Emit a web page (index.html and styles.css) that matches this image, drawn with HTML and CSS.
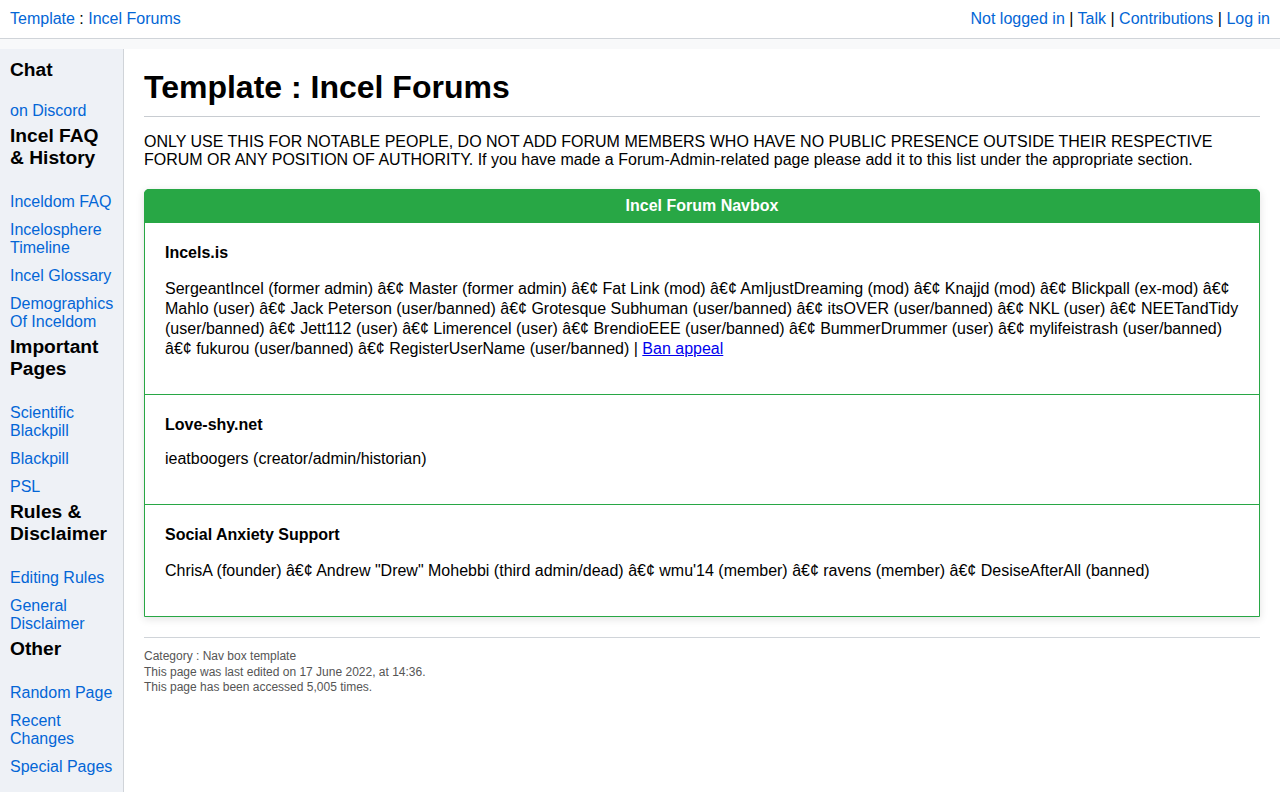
FILE: index.html
```html
<!DOCTYPE html>
<html lang="en">
<head>
<meta charset="utf-8">
<title>Template : Incel Forums</title>
<link rel="stylesheet" href="styles.css">
</head>
<body>
<header class="topbar">
  <div class="crumbs"><a href="#">Template</a> : <a href="#">Incel Forums</a></div>
  <div class="userlinks"><a href="#">Not logged in</a> | <a href="#">Talk</a> | <a href="#">Contributions</a> | <a href="#">Log in</a></div>
</header>
<div class="layout">
  <nav class="sidebar">
    <h3 class="side-head">Chat</h3>
    <ul class="side-list side-list-first">
      <li><a href="#">on Discord</a></li>
    </ul>
    <h3 class="side-head">Incel FAQ &amp; History</h3>
    <ul class="side-list">
      <li><a href="#">Inceldom FAQ</a></li>
      <li><a href="#">Incelosphere Timeline</a></li>
      <li><a href="#">Incel Glossary</a></li>
      <li><a href="#">Demographics Of Inceldom</a></li>
    </ul>
    <h3 class="side-head">Important Pages</h3>
    <ul class="side-list">
      <li><a href="#">Scientific Blackpill</a></li>
      <li><a href="#">Blackpill</a></li>
      <li><a href="#">PSL</a></li>
    </ul>
    <h3 class="side-head">Rules &amp; Disclaimer</h3>
    <ul class="side-list">
      <li><a href="#">Editing Rules</a></li>
      <li><a href="#">General Disclaimer</a></li>
    </ul>
    <h3 class="side-head">Other</h3>
    <ul class="side-list">
      <li><a href="#">Random Page</a></li>
      <li><a href="#">Recent Changes</a></li>
      <li><a href="#">Special Pages</a></li>
    </ul>
  </nav>
  <main class="content">
    <h1 class="page-title">Template : Incel Forums</h1>
    <p class="intro">ONLY USE THIS FOR NOTABLE PEOPLE, DO NOT ADD FORUM MEMBERS WHO HAVE NO PUBLIC PRESENCE OUTSIDE THEIR RESPECTIVE FORUM OR ANY POSITION OF AUTHORITY. If you have made a Forum-Admin-related page please add it to this list under the appropriate section.</p>
    <div class="navbox">
      <div class="navbox-head">Incel Forum Navbox</div>
      <section class="navbox-sec">
        <h4 class="sec-title">Incels.is</h4>
        <p class="sec-text">SergeantIncel (former admin) &acirc;&euro;&cent; Master (former admin) &acirc;&euro;&cent; Fat Link (mod) &acirc;&euro;&cent; AmIjustDreaming (mod) &acirc;&euro;&cent; Knajjd (mod) &acirc;&euro;&cent; Blickpall (ex-mod) &acirc;&euro;&cent; Mahlo (user) &acirc;&euro;&cent; Jack Peterson (user/banned) &acirc;&euro;&cent; Grotesque Subhuman (user/banned) &acirc;&euro;&cent; itsOVER (user/banned) &acirc;&euro;&cent; NKL (user) &acirc;&euro;&cent; NEETandTidy (user/banned) &acirc;&euro;&cent; Jett112 (user) &acirc;&euro;&cent; Limerencel (user) &acirc;&euro;&cent; BrendioEEE (user/banned) &acirc;&euro;&cent; BummerDrummer (user) &acirc;&euro;&cent; mylifeistrash (user/banned) &acirc;&euro;&cent; fukurou (user/banned) &acirc;&euro;&cent; RegisterUserName (user/banned) | <a class="plain-link" href="#">Ban appeal</a></p>
      </section>
      <section class="navbox-sec">
        <h4 class="sec-title sec-title-tight">Love-shy.net</h4>
        <p class="sec-text">ieatboogers (creator/admin/historian)</p>
      </section>
      <section class="navbox-sec">
        <h4 class="sec-title">Social Anxiety Support</h4>
        <p class="sec-text">ChrisA (founder) &acirc;&euro;&cent; Andrew "Drew" Mohebbi (third admin/dead) &acirc;&euro;&cent; wmu'14 (member) &acirc;&euro;&cent; ravens (member) &acirc;&euro;&cent; DesiseAfterAll (banned)</p>
      </section>
    </div>
    <footer class="page-footer">
      <div>Category : Nav box template</div>
      <div>This page was last edited on 17 June 2022, at 14:36.</div>
      <div>This page has been accessed 5,005 times.</div>
    </footer>
  </main>
</div>
</body>
</html>
```
FILE: styles.css
```css
html, body {
  margin: 0;
  padding: 0;
}
body {
  font-family: "Liberation Sans", Arial, Helvetica, sans-serif;
  font-size: 16px;
  color: #000;
  background: #f8f9fa;
  min-height: 100vh;
  display: flex;
  flex-direction: column;
}
a {
  color: #0366d6;
  text-decoration: none;
}
.topbar {
  height: 38px;
  border-bottom: 1px solid #d0d4d9;
  background: #fff;
  display: flex;
  align-items: center;
  justify-content: space-between;
  padding: 0 10px;
  line-height: 18px;
}
.layout {
  flex: 1;
  display: flex;
  margin-top: 10px;
}
.sidebar {
  width: 106px;
  flex: 0 0 auto;
  background: #eef1f6;
  border-right: 1px solid #d0d4d9;
  padding: 10px 7px 0 10px;
}
.side-head {
  margin: 0;
  font-size: 19.2px;
  line-height: 22px;
  font-weight: bold;
}
.side-list {
  list-style: none;
  margin: 0 0 5px;
  padding: 14px 0 0;
}
.side-list-first {
  padding-top: 11px;
}
.side-list li {
  margin-top: 10px;
  line-height: 18px;
}
.content {
  flex: 1;
  background: #fff;
  padding: 20px 20px 40px;
  min-width: 0;
}
.page-title {
  margin: 0;
  font-size: 32px;
  line-height: 36px;
  font-weight: bold;
  padding-bottom: 11px;
  border-bottom: 1px solid #c8ccd1;
}
.intro {
  margin: 16px 0 20px;
  line-height: 18px;
}
.navbox {
  border: 1px solid #28a745;
  border-radius: 5px 5px 0 0;
  box-shadow: 0 2px 8px rgba(0, 0, 0, 0.12);
  background: #fff;
}
.navbox-head {
  background: #28a745;
  color: #fff;
  font-weight: bold;
  text-align: center;
  height: 34px;
  line-height: 34px;
  margin: -1px -1px 0;
  border-radius: 5px 5px 0 0;
}
.navbox-sec {
  padding: 21px 20px 20px;
}
.navbox-sec + .navbox-sec {
  border-top: 1px solid #28a745;
}
.sec-title {
  margin: 0 0 17px;
  font-size: 16px;
  line-height: 18px;
  font-weight: bold;
}
.sec-title-tight {
  margin-bottom: 15px;
}
.sec-text {
  margin: 0 0 15px;
  line-height: 20px;
}
.plain-link {
  color: #0000ee;
  text-decoration: underline;
}
.page-footer {
  margin-top: 20px;
  border-top: 1px solid #d0d4d9;
  padding-top: 11px;
  font-size: 12px;
  line-height: 15.5px;
  color: #555;
}
```
